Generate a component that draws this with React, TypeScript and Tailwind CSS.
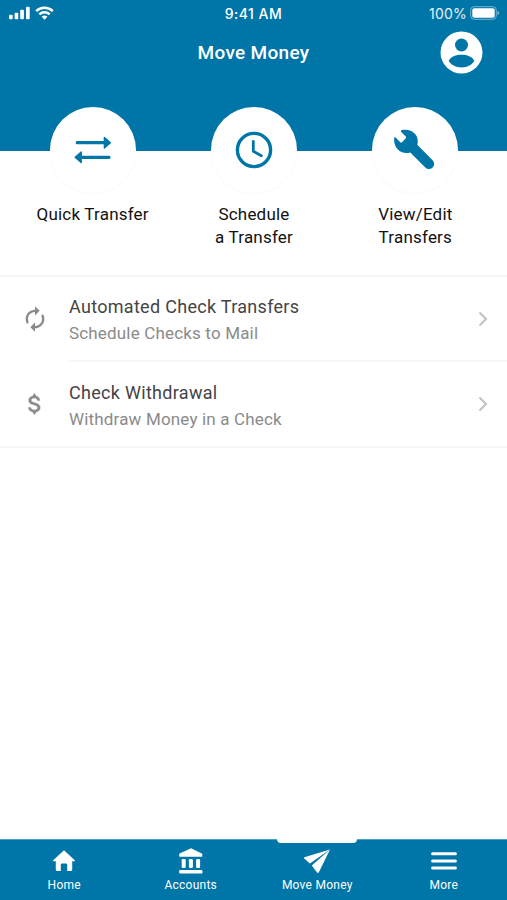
import React from 'react';

interface Action {
  lines: string[];
  icon: React.ReactNode;
}

interface Row {
  title: string;
  subtitle: string;
  icon: React.ReactNode;
}

interface Tab {
  label: string;
  icon: React.ReactNode;
  active?: boolean;
}

const TransferIcon = () => (
  <svg width="40" height="40" viewBox="0 0 40 40" fill="currentColor">
    <path d="M4.200 12.700H33M7 27.300h29" fill="none" stroke="currentColor" strokeWidth="3.200" strokeLinecap="round" />
    <path
      d="M31.400 7.400l6 5.300-6 5.300zM8.200 22l-6 5.300 6 5.300z"
      stroke="currentColor"
      strokeWidth="1.400"
      strokeLinejoin="round"
    />
  </svg>
);

const ClockIcon = () => (
  <svg width="40" height="40" viewBox="0 0 40 40" fill="none" stroke="currentColor">
    <circle cx="20" cy="20" r="16.600" strokeWidth="3.400" />
    <path d="M19.300 11.500v9.700l8 4.600" strokeWidth="2.800" strokeLinecap="round" strokeLinejoin="round" />
  </svg>
);

const WrenchIcon = () => (
  <svg width="42" height="42" viewBox="0 0 42 42" fill="currentColor">
    <path d="M1.400 8.300L6 13q1.200 1 2.300 0l3.300-3.600q.900-1.100 0-2.200L7 2.800Q6.400 1.300 8 1C17.500-.800 26 6 23.300 15.800L38.600 31.300a5.100 5.100 0 0 1-7.300 7.300L16.300 23.400C7.500 26.500-1.200 19 .300 9.100q.300-1.400 1.100-.8z" />
  </svg>
);

const SyncIcon = () => (
  <svg width="28" height="28" viewBox="0 0 24 24" fill="currentColor">
    <path d="M12 6v3l4-4-4-4v3c-4.420 0-8 3.580-8 8 0 1.570.460 3.030 1.240 4.260L6.700 14.800c-.450-.830-.700-1.790-.700-2.800 0-3.310 2.690-6 6-6zm6.760 1.740L17.300 9.200c.440.840.700 1.790.700 2.800 0 3.310-2.690 6-6 6v-3l-4 4 4 4v-3c4.420 0 8-3.580 8-8 0-1.570-.460-3.030-1.240-4.260z" />
  </svg>
);

const DollarIcon = () => (
  <svg width="28" height="28" viewBox="0 0 24 24" fill="currentColor" stroke="currentColor" strokeWidth=".300">
    <path d="M11.800 10.900c-2.270-.590-3-1.200-3-2.150 0-1.090 1.010-1.850 2.700-1.850 1.780 0 2.440.850 2.500 2.100h2.210c-.070-1.720-1.120-3.300-3.210-3.810L11.500 2.800l-1.500 2.360c-1.940.420-3.500 1.680-3.500 3.610 0 2.310 1.910 3.460 4.700 4.130 2.500.600 3 1.480 3 2.410 0 .690-.490 1.790-2.700 1.790-2.060 0-2.870-.920-2.980-2.100h-2.200c.120 2.190 1.760 3.420 3.680 3.830L11.500 21.200l1.500-2.350c1.950-.370 3.500-1.500 3.500-3.550 0-2.840-2.430-3.810-4.700-4.400z" />
  </svg>
);

const HomeIcon = () => (
  <svg width="26" height="26" viewBox="0 0 26 26" fill="currentColor">
    <path d="M13 2.300L24 12.500q.400.800-.600.800h-2.200v8.400q0 1.300-1.300 1.300h-3.700v-6.500q0-1-1-1h-4.400q-1 0-1 1V23H6.100q-1.300 0-1.300-1.300v-8.400H2.600q-1 0-.6-.8z" />
  </svg>
);

const BankIcon = () => (
  <svg width="26" height="26" viewBox="0 0 26 26" fill="currentColor">
    <path d="M13 .200L24.300 5.800v2.300q0 .700-.700.700H1.900q-.700 0-.7-.7V5.800z" />
    <rect x="3.700" y="11" width="4" height="9" rx="1.300" />
    <rect x="10.900" y="11" width="4" height="9" rx="1.300" />
    <rect x="18.100" y="11" width="4" height="9" rx="1.300" />
    <rect x="1.200" y="22" width="23.200" height="3.600" rx="1.200" />
  </svg>
);

const PlaneIcon = () => (
  <svg width="26" height="26" viewBox="0 0 26 26" fill="currentColor">
    <path d="M26 1.500L.300 9.300q-.700.500 0 1.300l5.600 5z" />
    <path d="M26 1.500L7.800 17.600l5.200 6.800q1.100 1 1.900-.2z" />
  </svg>
);

const MenuIcon = () => (
  <svg width="26" height="26" viewBox="0 0 26 26" stroke="currentColor" strokeWidth="3" strokeLinecap="round">
    <path d="M1.600 5.700h22.800M1.600 12.900h22.800M1.600 20.100h22.800" />
  </svg>
);

const actions: Action[] = [
  { lines: ['Quick Transfer'], icon: <TransferIcon /> },
  { lines: ['Schedule', 'a Transfer'], icon: <ClockIcon /> },
  { lines: ['View/Edit', 'Transfers'], icon: <WrenchIcon /> },
];

const rows: Row[] = [
  { title: 'Automated Check Transfers', subtitle: 'Schedule Checks to Mail', icon: <SyncIcon /> },
  { title: 'Check Withdrawal', subtitle: 'Withdraw Money in a Check', icon: <DollarIcon /> },
];

const tabs: Tab[] = [
  { label: 'Home', icon: <HomeIcon /> },
  { label: 'Accounts', icon: <BankIcon /> },
  { label: 'Move Money', icon: <PlaneIcon />, active: true },
  { label: 'More', icon: <MenuIcon /> },
];

const StatusBar = () => (
  <div className="grid h-7 grid-cols-3 items-center px-[7px] pb-[2px] text-white">
    <div className="flex items-center gap-[4px]">
      <svg width="24" height="14" viewBox="0 0 24 14" fill="currentColor">
        <rect x="2" y="8.700" width="3.700" height="4.600" rx="1" />
        <rect x="7.600" y="6.700" width="3.700" height="6.600" rx="1" />
        <rect x="13.200" y="3.800" width="3.700" height="9.500" rx="1" />
        <rect x="19" y=".700" width="3.700" height="12.600" rx="1" />
      </svg>
      <svg width="19" height="14" viewBox="0 0 19 14" fill="none" stroke="currentColor" strokeWidth="2.500">
        <path d="M1.200 5.200a12 12 0 0 1 16.600 0M4.300 8.400a7.600 7.600 0 0 1 10.400 0" />
        <path d="M6.600 10.800a4.300 4.300 0 0 1 5.800 0L9.500 13.800z" fill="currentColor" stroke="none" />
      </svg>
    </div>
    <div className="text-center font-[Inter] text-[14px] font-medium tracking-[0.45px]">9:41 AM</div>
    <div className="flex items-center justify-end gap-[3px]">
      <span className="font-[Inter] text-[14px] tracking-[0.2px] text-white/90">100%</span>
      <svg width="30" height="14" viewBox="0 0 30 14">
        <rect x=".700" y=".700" width="25.600" height="12.600" rx="3.500" fill="none" stroke="white" strokeOpacity=".450" />
        <rect x="2.300" y="2.300" width="22.400" height="9.400" rx="2" fill="white" />
        <path d="M27.500 4.800v4.400q1.700-.7 1.700-2.200t-1.700-2.200z" fill="white" fillOpacity=".500" />
      </svg>
    </div>
  </div>
);

const App: React.FC = () => {
  return (
    <div className="flex h-[900px] w-[507px] flex-col overflow-hidden bg-white font-[Roboto,sans-serif]">
      <header className="h-[151px] shrink-0 bg-[#0075a8]">
        <StatusBar />
        <div className="grid h-[49px] grid-cols-[1fr_auto_1fr] items-center px-[24px] text-white">
          <h1 className="col-start-2 pt-[1px] text-[19px] font-medium tracking-[0.3px]">Move Money</h1>
          <svg className="justify-self-end" width="43" height="43" viewBox="0 0 43 43">
            <circle cx="21.500" cy="21.500" r="21" fill="white" />
            <circle cx="21.500" cy="14" r="6.500" fill="#0075a8" />
            <path d="M8.700 30c1.500-4.500 7.800-6.300 12.800-6.300s11.300 1.800 12.800 6.300c-2 3.800-7.300 6.400-12.800 6.400s-10.800-2.600-12.800-6.400z" fill="#0075a8" />
          </svg>
        </div>
      </header>

      {/* Round shortcuts, pulled up over the header's lower edge */}
      <section className="-mt-11 grid h-[168px] shrink-0 grid-cols-3 pl-3 pr-[11px]">
        {actions.map((action) => (
          <div key={action.lines[0]} className="flex flex-col items-center">
            <div className="flex size-[86px] items-center justify-center rounded-full bg-white text-[#0075a8] shadow-[0_1px_3px_rgba(0,0,0,0.03)]">
              {action.icon}
            </div>
            <div className="mt-[10px] text-center text-[17px] leading-[23px] tracking-[0.2px] text-[#111]">
              {action.lines.map((line) => (
                <div key={line}>{line}</div>
              ))}
            </div>
          </div>
        ))}
      </section>

      <main className="grow border-t-2 border-[#f6f6f6]">
        {rows.map((row) => (
          <div key={row.title} className="group flex h-[85px] last:h-[86px]">
            <div className="flex w-[69px] items-center justify-center pb-[2px] text-[#8a8a8a]">{row.icon}</div>
            <div className="flex grow items-center justify-between border-b-2 border-[#f6f6f6] pr-[18px] group-last:-ml-[69px] group-last:pl-[69px]">
              <div className="pt-[2px] group-last:pt-[3px]">
                <div className="text-[18px] leading-[26px] tracking-[0.3px] text-[#444]">{row.title}</div>
                <div className="text-[17px] leading-[26px] tracking-[0.17px] text-[#8a8a8a]">{row.subtitle}</div>
              </div>
              <svg width="12" height="16" viewBox="0 0 12 16" fill="none" stroke="#c4c4c4" strokeWidth="2.200">
                <path d="M2.500 1.500L9 8l-6.500 6.500" />
              </svg>
            </div>
          </div>
        ))}
      </main>

      <nav className="grid h-[61px] shrink-0 grid-cols-4 border-t border-[#4d9fc4] bg-[#0075a8] pl-px text-white">
        {tabs.map((tab) => (
          <div key={tab.label} className="relative flex flex-col items-center pt-[8px]">
            {tab.active && <div className="absolute -top-px h-[4px] w-[80px] rounded-b-[4px] bg-white" />}
            {tab.icon}
            <span className="mt-[3px] text-[12px] leading-4 tracking-[0.25px]">{tab.label}</span>
          </div>
        ))}
      </nav>
    </div>
  );
};

export default App;
